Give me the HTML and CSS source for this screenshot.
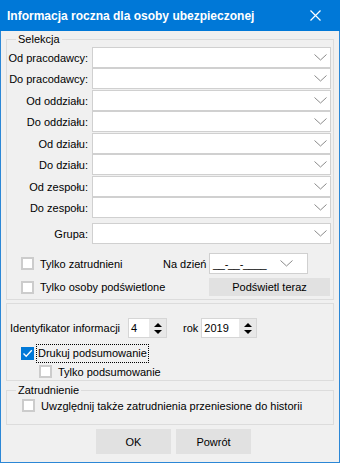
FILE: index.html
```html
<!DOCTYPE html>
<html lang="pl">
<head>
    <meta charset="UTF-8">
    <meta name="viewport" content="width=device-width, initial-scale=1.0">
    <title>Informacja roczna dla osoby ubezpieczonej</title>
    <link rel="stylesheet" href="styles.css">
</head>
<body>
    <div class="window">
        <div class="titlebar">
            <span class="title">Informacja roczna dla osoby ubezpieczonej</span>
            <svg class="close" width="11" height="11" viewBox="0 0 11 11"><path d="M0.5 0.5 L10.5 10.5 M10.5 0.5 L0.5 10.5" stroke="#fff" stroke-width="1.2" fill="none"/></svg>
        </div>
        <div class="content">
            <fieldset class="group selekcja">
                <legend>Selekcja</legend>
                <div class="pair first">
                    <div class="field"><span class="label">Od pracodawcy:</span><div class="combo"><svg class="chev" width="13" height="7" viewBox="0 0 13 7"><path d="M0.5 0.5 L6.5 6 L12.5 0.5" stroke="#8a8a8a" fill="none"/></svg></div></div>
                    <div class="field"><span class="label">Do pracodawcy:</span><div class="combo"><svg class="chev" width="13" height="7" viewBox="0 0 13 7"><path d="M0.5 0.5 L6.5 6 L12.5 0.5" stroke="#8a8a8a" fill="none"/></svg></div></div>
                </div>
                <div class="pair">
                    <div class="field"><span class="label">Od oddziału:</span><div class="combo"><svg class="chev" width="13" height="7" viewBox="0 0 13 7"><path d="M0.5 0.5 L6.5 6 L12.5 0.5" stroke="#8a8a8a" fill="none"/></svg></div></div>
                    <div class="field"><span class="label">Do oddziału:</span><div class="combo"><svg class="chev" width="13" height="7" viewBox="0 0 13 7"><path d="M0.5 0.5 L6.5 6 L12.5 0.5" stroke="#8a8a8a" fill="none"/></svg></div></div>
                </div>
                <div class="pair">
                    <div class="field"><span class="label">Od działu:</span><div class="combo"><svg class="chev" width="13" height="7" viewBox="0 0 13 7"><path d="M0.5 0.5 L6.5 6 L12.5 0.5" stroke="#8a8a8a" fill="none"/></svg></div></div>
                    <div class="field"><span class="label">Do działu:</span><div class="combo"><svg class="chev" width="13" height="7" viewBox="0 0 13 7"><path d="M0.5 0.5 L6.5 6 L12.5 0.5" stroke="#8a8a8a" fill="none"/></svg></div></div>
                </div>
                <div class="pair">
                    <div class="field"><span class="label">Od zespołu:</span><div class="combo"><svg class="chev" width="13" height="7" viewBox="0 0 13 7"><path d="M0.5 0.5 L6.5 6 L12.5 0.5" stroke="#8a8a8a" fill="none"/></svg></div></div>
                    <div class="field"><span class="label">Do zespołu:</span><div class="combo"><svg class="chev" width="13" height="7" viewBox="0 0 13 7"><path d="M0.5 0.5 L6.5 6 L12.5 0.5" stroke="#8a8a8a" fill="none"/></svg></div></div>
                </div>
                <div class="field grupa"><span class="label">Grupa:</span><div class="combo"><svg class="chev" width="13" height="7" viewBox="0 0 13 7"><path d="M0.5 0.5 L6.5 6 L12.5 0.5" stroke="#8a8a8a" fill="none"/></svg></div></div>
                <div class="opts">
                    <label class="check c1"><span class="box"></span>Tylko zatrudnieni</label>
                    <span class="na">Na dzień</span>
                    <div class="combo date"><span class="mask">__-__-____</span><svg class="chev" width="13" height="7" viewBox="0 0 13 7"><path d="M0.5 0.5 L6.5 6 L12.5 0.5" stroke="#8a8a8a" fill="none"/></svg></div>
                    <label class="check c2"><span class="box"></span>Tylko osoby podświetlone</label>
                    <button class="btn light">Podświetl teraz</button>
                </div>
            </fieldset>
            <fieldset class="group ident">
                <div class="spin-row">
                    <span class="ident-label">Identyfikator informacji</span>
                    <div class="spin num"><span class="val">4</span><span class="arrows"><i class="up"></i><i class="down"></i></span></div>
                    <span class="rok">rok</span>
                    <div class="spin year"><span class="val">2019</span><span class="arrows"><i class="up"></i><i class="down"></i></span></div>
                </div>
                <label class="check drukuj"><span class="box checked"><svg width="13" height="13" viewBox="0 0 13 13"><path d="M2.5 6.5 L5.2 9.3 L10.8 3.2" stroke="#fff" stroke-width="1.3" fill="none"/></svg></span><span class="focus">Drukuj podsumowanie</span></label>
                <label class="check tylko"><span class="box"></span>Tylko podsumowanie</label>
            </fieldset>
            <fieldset class="group zatr">
                <legend>Zatrudnienie</legend>
                <label class="check hist"><span class="box"></span>Uwzględnij także zatrudnienia przeniesione do historii</label>
            </fieldset>
            <div class="buttons">
                <button class="btn">OK</button>
                <button class="btn">Powrót</button>
            </div>
        </div>
    </div>
</body>
</html>
```

FILE: styles.css
```css
*, *:before, *:after {
    box-sizing: border-box;
}
body {
    margin: 0;
    font-family: "Liberation Sans", Arial, sans-serif;
    font-size: 11px;
    color: #000;
}
.window {
    width: 340px;
    height: 463px;
    background: #f0f0f0;
    border: 1px solid #2b87d6;
    border-top: none;
}
.titlebar {
    height: 31px;
    margin: 0 -1px;
    background: #0078d7;
    display: flex;
    align-items: center;
    padding-left: 7px;
}
.title {
    color: #fff;
    font-weight: bold;
    font-size: 12px;
    flex: 1;
}
.close {
    margin-right: 19px;
}
.content {
    padding: 1px 5px 0 5px;
}
.group {
    margin: 0;
    padding: 0 2px 0 0;
    border: 1px solid #dcdcdc;
    min-width: 0;
}
.group legend {
    margin-left: 9px;
    padding: 0 2px;
    line-height: 14px;
}
.selekcja {
    padding-bottom: 3px;
}
.pair {
    margin-top: 1px;
}
.field {
    display: flex;
    align-items: center;
    height: 21px;
}
.label {
    width: 81px;
    text-align: right;
    margin-right: 4px;
}
.combo {
    flex: 1;
    height: 21px;
    background: #fff;
    border: 1px solid #d0d0d0;
    display: flex;
    align-items: center;
    justify-content: flex-end;
    padding-right: 3px;
}
.grupa {
    margin-top: 5px;
}
.opts {
    display: grid;
    grid-template-columns: 156px 46px 1fr;
    grid-template-rows: 21px 18px;
    row-gap: 4px;
    margin-top: 9px;
    align-items: center;
}
.check {
    display: flex;
    align-items: center;
}
.box {
    width: 13px;
    height: 13px;
    border: 2px solid #cccccc;
    background: #fff;
    margin-right: 6px;
    flex: none;
}
.box.checked {
    background: #0078d7;
    border: none;
}
.box svg {
    display: block;
}
.c1, .c2 {
    padding-left: 14px;
}
.c2 {
    grid-column: 1 / 3;
}
.combo.date {
    flex: none;
    width: 99px;
    justify-content: space-between;
    padding-left: 3px;
    padding-right: 14px;
}
.mask {
    letter-spacing: -0.3px;
}
.btn {
    font-family: inherit;
    font-size: 11px;
    border: none;
    background: #e1e1e1;
    padding: 0;
    color: #000;
}
.btn.light {
    width: 121px;
    height: 18px;
}
.ident {
    margin-top: 3px;
    padding: 14px 0 2px 0;
    height: 78px;
}
.spin-row {
    display: flex;
    align-items: center;
    height: 20px;
    padding-left: 3px;
}
.ident-label {
    width: 118px;
}
.spin {
    height: 20px;
    background: #fff;
    border: 1px solid #d6d6d6;
    display: flex;
    align-items: center;
    padding-left: 2px;
}
.spin .val {
    flex: 1;
}
.num {
    width: 39px;
}
.year {
    width: 56px;
}
.rok {
    margin: 0 3px 0 16px;
}
.arrows {
    width: 17px;
    height: 18px;
    background: #e8e8e8;
    display: flex;
    flex-direction: column;
    align-items: center;
    justify-content: center;
    gap: 3px;
}
.arrows i {
    width: 0;
    height: 0;
    border-left: 4px solid transparent;
    border-right: 4px solid transparent;
}
.arrows .up {
    border-bottom: 4px solid #000;
}
.arrows .down {
    border-top: 4px solid #000;
}
.drukuj {
    margin-top: 7px;
    padding-left: 14px;
}
.drukuj .box {
    margin-right: 3px;
}
.focus {
    outline: 1px dotted #000;
    padding: 1px 1px;
    line-height: 15px;
}
.tylko {
    margin-top: 3px;
    padding-left: 32px;
}
.zatr {
    margin-top: 2px;
    height: 42px;
    padding-top: 2px;
}
.hist {
    padding-left: 15px;
}
.buttons {
    display: flex;
    gap: 5px;
    padding-left: 90px;
    margin-top: 4px;
}
.buttons .btn {
    width: 75px;
    height: 25px;
}
```
